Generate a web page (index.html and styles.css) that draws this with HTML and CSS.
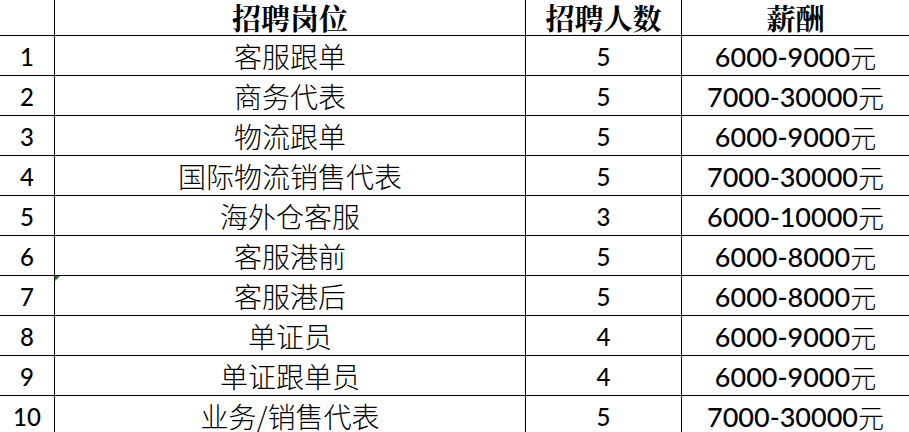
FILE: index.html
```html
<!DOCTYPE html>
<html lang="zh-CN">
<head>
<meta charset="utf-8">
<title>招聘信息</title>
<link rel="stylesheet" href="styles.css">
</head>
<body>
<div class="sheet">
  <div class="cell head"></div>
  <div class="cell head">招聘岗位</div>
  <div class="cell head">招聘人数</div>
  <div class="cell head">薪酬</div>

  <div class="cell num">1</div><div class="cell job">客服跟单</div><div class="cell num">5</div><div class="cell pay">6000-9000<span class="cjk">元</span></div>
  <div class="cell num">2</div><div class="cell job">商务代表</div><div class="cell num">5</div><div class="cell pay">7000-30000<span class="cjk">元</span></div>
  <div class="cell num">3</div><div class="cell job">物流跟单</div><div class="cell num">5</div><div class="cell pay">6000-9000<span class="cjk">元</span></div>
  <div class="cell num">4</div><div class="cell job">国际物流销售代表</div><div class="cell num">5</div><div class="cell pay">7000-30000<span class="cjk">元</span></div>
  <div class="cell num">5</div><div class="cell job">海外仓客服</div><div class="cell num">3</div><div class="cell pay">6000-10000<span class="cjk">元</span></div>
  <div class="cell num">6</div><div class="cell job">客服港前</div><div class="cell num">5</div><div class="cell pay">6000-8000<span class="cjk">元</span></div>
  <div class="cell num">7</div><div class="cell job flagged">客服港后</div><div class="cell num">5</div><div class="cell pay">6000-8000<span class="cjk">元</span></div>
  <div class="cell num">8</div><div class="cell job">单证员</div><div class="cell num">4</div><div class="cell pay">6000-9000<span class="cjk">元</span></div>
  <div class="cell num">9</div><div class="cell job">单证跟单员</div><div class="cell num">4</div><div class="cell pay">6000-9000<span class="cjk">元</span></div>
  <div class="cell num">10</div><div class="cell job">业务/销售代表</div><div class="cell num">5</div><div class="cell pay">7000-30000<span class="cjk">元</span></div>
</div>
</body>
</html>
```

FILE: styles.css
```css
html, body {
  margin: 0;
  padding: 0;
  background: #ffffff;
  overflow: hidden;
}

.sheet {
  width: 909px;
  height: 440px;
  display: grid;
  grid-template-columns: 54px 470px 155px 227px;
  grid-template-rows: 35px repeat(10, 39px);
  gap: 1px;
  background: #000000;
  color: #000000;
}

.cell {
  background: #ffffff;
  display: flex;
  align-items: center;
  justify-content: center;
  white-space: nowrap;
  position: relative;
  line-height: 1;
}

.head {
  font-family: "Noto Serif CJK SC", "Noto Sans CJK SC", serif;
  font-weight: 700;
  font-size: 29px;
}

.job {
  font-family: "Noto Sans CJK SC", sans-serif;
  font-weight: 300;
  font-size: 28px;
}

.num {
  font-family: Lato, "Noto Sans CJK SC", sans-serif;
  font-weight: 500;
  font-size: 24px;
  padding-top: 3px;
}

.pay {
  font-family: Lato, "Noto Sans CJK SC", sans-serif;
  font-weight: 500;
  font-size: 27px;
  padding-top: 2px;
}

.cjk {
  font-family: "Noto Sans CJK SC", sans-serif;
  font-weight: 300;
  font-size: 26px;
}

.flagged::before {
  content: "";
  position: absolute;
  left: 0;
  top: 0;
  width: 0;
  height: 0;
  border-top: 5px solid #1f8a1f;
  border-right: 5px solid transparent;
}
```
